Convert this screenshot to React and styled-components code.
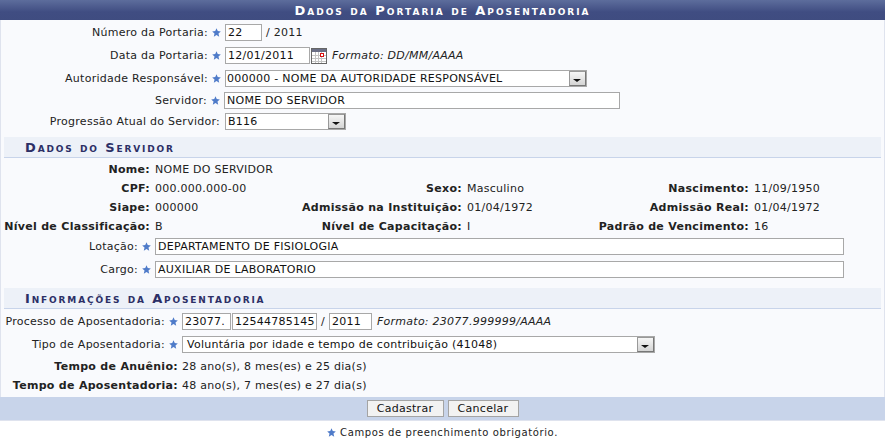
import React from "react";
import styled, { createGlobalStyle } from "styled-components";

const GlobalStyle = createGlobalStyle`
  html, body { margin: 0; padding: 0; background: #fff; }
  body {
    font-family: "DejaVu Sans", Verdana, sans-serif;
    font-size: 11px;
    letter-spacing: 0.26px;
    color: #222;
  }
`;

const Panel = styled.div`
  width: 885px;
  box-sizing: border-box;
  border: 1px solid #dfe3ee;
  border-top: none;
  background: #f9fafd;
`;

const Title = styled.div`
  height: 20px;
  margin: 0 -1px;
  background: linear-gradient(#5d6d9c, #404d82 60%, #3f4c80);
  color: #fff;
  font-size: 13px;
  font-weight: bold;
  font-variant: small-caps;
  letter-spacing: 2px;
  line-height: 21px;
  text-align: center;
`;

const Rows = styled.div`
  display: flex;
  flex-direction: column;
  gap: 6px;
  padding: ${(p) => p.$pad};
`;

const Row = styled.div`
  display: grid;
  grid-template-columns: ${(p) => p.$label}px ${(p) => p.$star}px 1fr;
  align-items: center;
  height: 17px;
  margin-top: ${(p) => p.$top || 0}px;
`;

const Label = styled.span`
  text-align: right;
  white-space: nowrap;
`;

const StarCell = styled.span`
  display: flex;
  justify-content: center;
`;

const Field = styled.div`
  display: flex;
  align-items: center;
`;

const Input = styled.div`
  box-sizing: border-box;
  width: ${(p) => p.$w}px;
  height: 17px;
  margin-left: ${(p) => p.$left || 0}px;
  border: 1px solid #a8a8a8;
  background: #fff;
  color: #111;
  line-height: 15px;
  padding-left: 2px;
  white-space: nowrap;
  overflow: hidden;
`;

const SelectBox = styled(Input)`
  position: relative;
  padding-left: ${(p) => p.$pad ?? 2}px;
`;

const SelectButton = styled.span`
  position: absolute;
  top: 0;
  right: 0;
  width: 17px;
  height: 15px;
  box-sizing: border-box;
  border: 1px solid #777;
  border-top-color: #999;
  border-left-color: #999;
  background: linear-gradient(#f6f6f6, #d4d4d4);
  &::after {
    content: "";
    position: absolute;
    left: 3px;
    top: 7px;
    border: 4px solid transparent;
    border-top: 3px solid #111;
    border-bottom: none;
  }
`;

const Slash = styled.span`
  margin: 0 ${(p) => p.$right}px 0 ${(p) => p.$left}px;
`;

const Hint = styled.em`
  margin-left: ${(p) => p.$left}px;
  white-space: nowrap;
`;

const Section = styled.div`
  margin: 0 3px;
  height: 20px;
  border-bottom: 1px solid #c8d4ea;
  background: #edf1f8;
  color: #2c2f66;
  font-size: 13px;
  font-weight: bold;
  font-variant: small-caps;
  letter-spacing: 1.85px;
  line-height: 21px;
  padding-left: 21px;
`;

const DataGrid = styled.div`
  display: grid;
  grid-template-columns: ${(p) => p.$cols};
  grid-auto-rows: 19px;
  align-items: center;
  padding: ${(p) => p.$pad};
`;

const Key = styled.span`
  font-weight: bold;
  letter-spacing: 0.3px;
  text-align: right;
  white-space: nowrap;
`;

const Value = styled.span`
  padding-left: ${(p) => p.$pad || 5}px;
  white-space: nowrap;
`;

const Footer = styled.div`
  height: 23px;
  margin: 0 -1px;
  background: #c8d4ea;
  display: flex;
  justify-content: center;
  align-items: center;
  gap: 4px;
`;

const Button = styled.button`
  box-sizing: border-box;
  width: ${(p) => p.$w}px;
  height: 17px;
  padding: 0;
  border: 1px solid #a4a4a4;
  background: #f2f2f2;
  color: #111;
  font: 11px "DejaVu Sans", Verdana, sans-serif;
  letter-spacing: 0.28px;
`;

const Note = styled.div`
  width: 885px;
  margin-top: 6px;
  display: flex;
  justify-content: center;
  align-items: center;
  gap: 4px;
  font-size: 10px;
  letter-spacing: 0.6px;
`;

const Star = () => (
  <svg width="9" height="9" viewBox="0 0 10 10">
    <polygon
      points="5,0.3 6.4,3.4 9.8,3.8 7.2,6 8,9.6 5,7.8 2,9.6 2.8,6 0.2,3.8 3.6,3.4"
      fill="#4f7bc9"
    />
  </svg>
);

const CalendarIcon = () => (
  <svg width="16" height="16" viewBox="0 0 16 16" style={{ marginLeft: 1 }}>
    <rect x="0.5" y="0.5" width="15" height="15" fill="#fff" stroke="#666" />
    <rect x="1" y="1" width="14" height="3" fill="#6b6f86" />
    <path d="M1 7.5h14M1 10.5h14M1 13.5h14M4.5 4v11M7.5 4v11M10.5 4v11" stroke="#c4c4c4" />
    <rect x="9.5" y="5.5" width="3" height="3" fill="#fff" stroke="#d81010" />
  </svg>
);

const FormRow = ({ label, width, top, star = true, children }) => (
  <Row $label={width} $star={star ? 17 : 5} $top={top}>
    <Label>{label}</Label>
    <StarCell>{star && <Star />}</StarCell>
    <Field>{children}</Field>
  </Row>
);

const Select = ({ w, pad, children }) => (
  <SelectBox $w={w} $pad={pad}>
    {children}
    <SelectButton />
  </SelectBox>
);

const servidor = [
  ["Nome:", "NOME DO SERVIDOR", "", "", "", ""],
  ["CPF:", "000.000.000-00", "Sexo:", "Masculino", "Nascimento:", "11/09/1950"],
  ["Siape:", "000000", "Admissão na Instituição:", "01/04/1972", "Admissão Real:", "01/04/1972"],
  ["Nível de Classificação:", "B", "Nível de Capacitação:", "I", "Padrão de Vencimento:", "16"],
];

export default function App() {
  return (
    <>
      <GlobalStyle />
      <Panel>
        <Title>Dados da Portaria de Aposentadoria</Title>
        <Rows $pad="4px 0 7px">
          <FormRow label="Número da Portaria:" width={207}>
            <Input $w={37}>22</Input>
            <Slash $left={4} $right={0}>/ 2011</Slash>
          </FormRow>
          <FormRow label="Data da Portaria:" width={207}>
            <Input $w={85}>12/01/2011</Input>
            <CalendarIcon />
            <Hint $left={5}>Formato: DD/MM/AAAA</Hint>
          </FormRow>
          <FormRow label="Autoridade Responsável:" width={207}>
            <Select w={362} pad={1}>000000 - NOME DA AUTORIDADE RESPONSÁVEL</Select>
          </FormRow>
          <FormRow label="Servidor:" width={206} top={-1}>
            <Input $w={396}>NOME DO SERVIDOR</Input>
          </FormRow>
          <FormRow label="Progressão Atual do Servidor:" width={219} top={-2} star={false}>
            <Select w={121}>B116</Select>
          </FormRow>
        </Rows>
        <Section>Dados do Servidor</Section>
        <DataGrid $cols="149px 100px 212px 117px 170px 1fr" $pad="2px 0 1px">
          {servidor.map((row) =>
            [0, 2, 4].map((i) => (
              <React.Fragment key={row[0] + i}>
                <Key>{row[i]}</Key>
                <Value>{row[i + 1]}</Value>
              </React.Fragment>
            ))
          )}
        </DataGrid>
        <Rows $pad="1px 0 10px">
          <FormRow label="Lotação:" width={137}>
            <Input $w={689}>DEPARTAMENTO DE FISIOLOGIA</Input>
          </FormRow>
          <FormRow label="Cargo:" width={137}>
            <Input $w={689}>AUXILIAR DE LABORATORIO</Input>
          </FormRow>
        </Rows>
        <Section>Informações da Aposentadoria</Section>
        <Rows $pad="4px 0 0">
          <FormRow label="Processo de Aposentadoria:" width={164}>
            <Input $w={49}>23077.</Input>
            <Input $w={85} $left={1}>12544785145</Input>
            <Slash $left={4} $right={4}>/</Slash>
            <Input $w={43}>2011</Input>
            <Hint $left={5}>Formato: 23077.999999/AAAA</Hint>
          </FormRow>
          <FormRow label="Tipo de Aposentadoria:" width={164}>
            <Select w={473} pad={4}>Voluntária por idade e tempo de contribuição (41048)</Select>
          </FormRow>
        </Rows>
        <DataGrid $cols="177px 1fr" $pad="4px 0 2px">
          <Key>Tempo de Anuênio:</Key>
          <Value $pad={4}>28 ano(s), 8 mes(es) e 25 dia(s)</Value>
          <Key>Tempo de Aposentadoria:</Key>
          <Value $pad={4}>48 ano(s), 7 mes(es) e 27 dia(s)</Value>
        </DataGrid>
        <Footer>
          <Button $w={77}>Cadastrar</Button>
          <Button $w={71}>Cancelar</Button>
        </Footer>
      </Panel>
      <Note>
        <Star /> Campos de preenchimento obrigatório.
      </Note>
    </>
  );
}
